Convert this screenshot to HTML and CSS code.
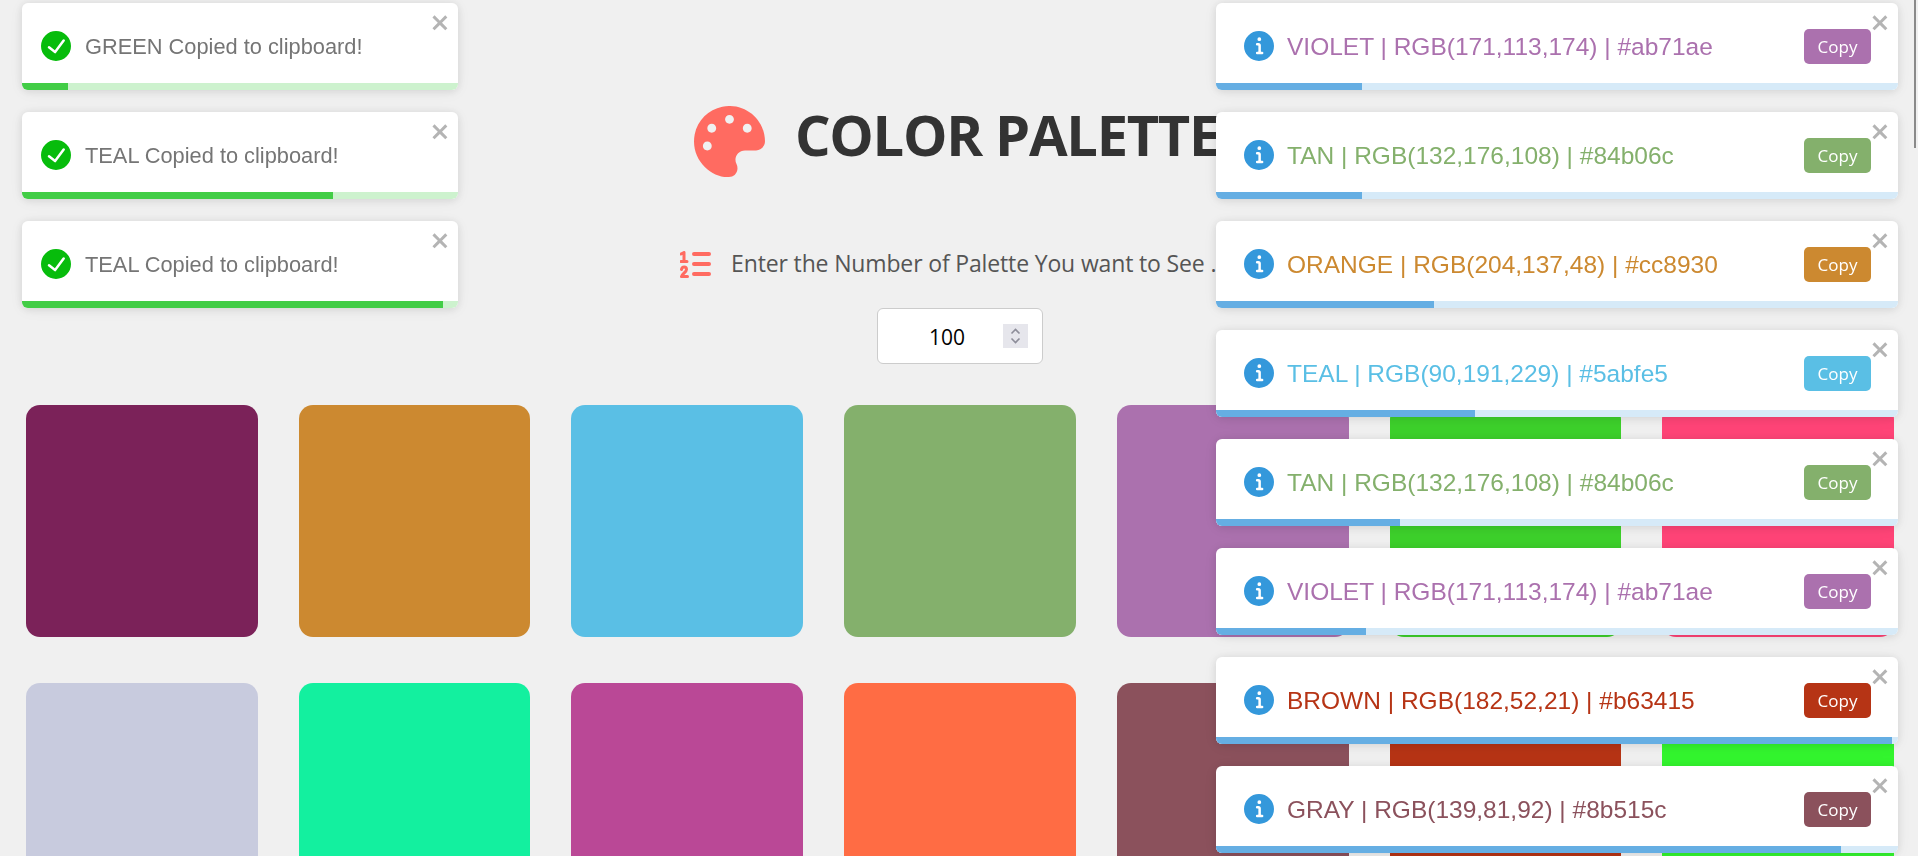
FILE: index.html
```html
<!DOCTYPE html>
<html lang="en">
<head>
<meta charset="utf-8">
<title>Color Palette</title>
<link rel="stylesheet" href="styles.css">
</head>
<body>
<main class="page">
  <header class="header">
    <h1 class="title">
      <svg class="title-icon" viewBox="0 0 512 512"><path d="M204.3 5C104.9 24.4 24.8 104.3 5.2 203.4c-37 187 131.7 326.4 258.8 306.7 41.2-6.4 61.4-54.6 42.5-91.7-23.1-45.4 9.9-98.4 60.9-98.4h79.7c35.8 0 64.8-29.6 64.9-65.3C511.5 97.1 368.1-26.9 204.3 5zM96 320c-17.7 0-32-14.3-32-32s14.3-32 32-32 32 14.3 32 32-14.3 32-32 32zm32-128c-17.7 0-32-14.3-32-32s14.3-32 32-32 32 14.3 32 32-14.3 32-32 32zm128-64c-17.7 0-32-14.3-32-32s14.3-32 32-32 32 14.3 32 32-14.3 32-32 32zm128 64c-17.7 0-32-14.3-32-32s14.3-32 32-32 32 14.3 32 32-14.3 32-32 32z"/></svg>
      <span class="title-text">COLOR PALETTE</span>
    </h1>
    <p class="prompt">
      <svg class="prompt-icon" viewBox="0 0 31 27"><path class="num" d="M1 3 4 1.5V10.5M1 10.5H7"/><path class="num" d="M1.5 18.5C2 15 6.5 15 6.5 18.5 6.5 21 2 23 1.5 25.5H7.5"/><path class="bar" d="M14 3H29M14 13H29M14 23H29"/></svg>
      <span class="prompt-text">Enter the Number of Palette You want to See .....</span>
    </p>
    <label class="number-box">
      <input class="number-input" type="number" value="100" aria-label="Number of palettes">
      <span class="spinner"><svg viewBox="0 0 25 24"><path d="M8.5 9.5 12.5 5.5 16.5 9.5M8.5 14.5 12.5 18.5 16.5 14.5"/></svg></span>
    </label>
  </header>

  <section class="swatches">
    <div class="swatch c-plum"></div>
    <div class="swatch c-orange"></div>
    <div class="swatch c-teal"></div>
    <div class="swatch c-tan"></div>
    <div class="swatch c-violet"></div>
    <div class="swatch c-green"></div>
    <div class="swatch c-pink"></div>
    <div class="swatch c-lavender"></div>
    <div class="swatch c-mint"></div>
    <div class="swatch c-magenta"></div>
    <div class="swatch c-coral"></div>
    <div class="swatch c-gray"></div>
    <div class="swatch c-brown"></div>
    <div class="swatch c-lime"></div>
  </section>
</main>

<aside class="toasts toasts-left">
  <div class="toast">
    <svg class="toast-icon success" viewBox="0 0 24 24"><path d="M12 0a12 12 0 1012 12A12.014 12.014 0 0012 0zm6.927 8.2l-6.845 9.289a1.011 1.011 0 01-1.43.188l-4.888-3.908a1 1 0 111.25-1.562l4.076 3.261 6.227-8.451a1 1 0 111.61 1.183z"/></svg>
    <span class="toast-text copied">GREEN Copied to clipboard!</span>
    <svg class="close" viewBox="0 0 14 16"><path d="M7.71 8.23l3.75 3.75-1.48 1.48-3.75-3.75-3.75 3.75L1 11.98l3.75-3.75L1 4.48 2.48 3l3.75 3.75L9.98 3l1.48 1.48-3.75 3.75z"/></svg>
    <div class="track track-success"><div class="fill fill-success" style="width:46px"></div></div>
  </div>
  <div class="toast">
    <svg class="toast-icon success" viewBox="0 0 24 24"><path d="M12 0a12 12 0 1012 12A12.014 12.014 0 0012 0zm6.927 8.2l-6.845 9.289a1.011 1.011 0 01-1.43.188l-4.888-3.908a1 1 0 111.25-1.562l4.076 3.261 6.227-8.451a1 1 0 111.61 1.183z"/></svg>
    <span class="toast-text copied">TEAL Copied to clipboard!</span>
    <svg class="close" viewBox="0 0 14 16"><path d="M7.71 8.23l3.75 3.75-1.48 1.48-3.75-3.75-3.75 3.75L1 11.98l3.75-3.75L1 4.48 2.48 3l3.75 3.75L9.98 3l1.48 1.48-3.75 3.75z"/></svg>
    <div class="track track-success"><div class="fill fill-success" style="width:311px"></div></div>
  </div>
  <div class="toast">
    <svg class="toast-icon success" viewBox="0 0 24 24"><path d="M12 0a12 12 0 1012 12A12.014 12.014 0 0012 0zm6.927 8.2l-6.845 9.289a1.011 1.011 0 01-1.43.188l-4.888-3.908a1 1 0 111.25-1.562l4.076 3.261 6.227-8.451a1 1 0 111.61 1.183z"/></svg>
    <span class="toast-text copied">TEAL Copied to clipboard!</span>
    <svg class="close" viewBox="0 0 14 16"><path d="M7.71 8.23l3.75 3.75-1.48 1.48-3.75-3.75-3.75 3.75L1 11.98l3.75-3.75L1 4.48 2.48 3l3.75 3.75L9.98 3l1.48 1.48-3.75 3.75z"/></svg>
    <div class="track track-success"><div class="fill fill-success" style="width:421px"></div></div>
  </div>
</aside>

<aside class="toasts toasts-right">
  <div class="toast toast-wide">
    <svg class="toast-icon info" viewBox="0 0 24 24"><path d="M12 0a12 12 0 1012 12A12.013 12.013 0 0012 0zm.25 5a1.5 1.5 0 11-1.5 1.5 1.5 1.5 0 011.5-1.5zm2.25 13.5h-4a1 1 0 010-2h.75a.25.25 0 00.25-.25v-4.5a.25.25 0 00-.25-.25h-.75a1 1 0 010-2h1a2 2 0 012 2v4.75a.25.25 0 00.25.25h.75a1 1 0 110 2z"/></svg>
    <span class="toast-text text-violet">VIOLET | RGB(171,113,174) | #ab71ae</span>
    <button class="copy c-violet">Copy</button>
    <svg class="close" viewBox="0 0 14 16"><path d="M7.71 8.23l3.75 3.75-1.48 1.48-3.75-3.75-3.75 3.75L1 11.98l3.75-3.75L1 4.48 2.48 3l3.75 3.75L9.98 3l1.48 1.48-3.75 3.75z"/></svg>
    <div class="track track-info"><div class="fill fill-info" style="width:146px"></div></div>
  </div>
  <div class="toast toast-wide">
    <svg class="toast-icon info" viewBox="0 0 24 24"><path d="M12 0a12 12 0 1012 12A12.013 12.013 0 0012 0zm.25 5a1.5 1.5 0 11-1.5 1.5 1.5 1.5 0 011.5-1.5zm2.25 13.5h-4a1 1 0 010-2h.75a.25.25 0 00.25-.25v-4.5a.25.25 0 00-.25-.25h-.75a1 1 0 010-2h1a2 2 0 012 2v4.75a.25.25 0 00.25.25h.75a1 1 0 110 2z"/></svg>
    <span class="toast-text text-tan">TAN | RGB(132,176,108) | #84b06c</span>
    <button class="copy c-tan">Copy</button>
    <svg class="close" viewBox="0 0 14 16"><path d="M7.71 8.23l3.75 3.75-1.48 1.48-3.75-3.75-3.75 3.75L1 11.98l3.75-3.75L1 4.48 2.48 3l3.75 3.75L9.98 3l1.48 1.48-3.75 3.75z"/></svg>
    <div class="track track-info"><div class="fill fill-info" style="width:146px"></div></div>
  </div>
  <div class="toast toast-wide">
    <svg class="toast-icon info" viewBox="0 0 24 24"><path d="M12 0a12 12 0 1012 12A12.013 12.013 0 0012 0zm.25 5a1.5 1.5 0 11-1.5 1.5 1.5 1.5 0 011.5-1.5zm2.25 13.5h-4a1 1 0 010-2h.75a.25.25 0 00.25-.25v-4.5a.25.25 0 00-.25-.25h-.75a1 1 0 010-2h1a2 2 0 012 2v4.75a.25.25 0 00.25.25h.75a1 1 0 110 2z"/></svg>
    <span class="toast-text text-orange">ORANGE | RGB(204,137,48) | #cc8930</span>
    <button class="copy c-orange">Copy</button>
    <svg class="close" viewBox="0 0 14 16"><path d="M7.71 8.23l3.75 3.75-1.48 1.48-3.75-3.75-3.75 3.75L1 11.98l3.75-3.75L1 4.48 2.48 3l3.75 3.75L9.98 3l1.48 1.48-3.75 3.75z"/></svg>
    <div class="track track-info"><div class="fill fill-info" style="width:218px"></div></div>
  </div>
  <div class="toast toast-wide">
    <svg class="toast-icon info" viewBox="0 0 24 24"><path d="M12 0a12 12 0 1012 12A12.013 12.013 0 0012 0zm.25 5a1.5 1.5 0 11-1.5 1.5 1.5 1.5 0 011.5-1.5zm2.25 13.5h-4a1 1 0 010-2h.75a.25.25 0 00.25-.25v-4.5a.25.25 0 00-.25-.25h-.75a1 1 0 010-2h1a2 2 0 012 2v4.75a.25.25 0 00.25.25h.75a1 1 0 110 2z"/></svg>
    <span class="toast-text text-teal">TEAL | RGB(90,191,229) | #5abfe5</span>
    <button class="copy c-teal">Copy</button>
    <svg class="close" viewBox="0 0 14 16"><path d="M7.71 8.23l3.75 3.75-1.48 1.48-3.75-3.75-3.75 3.75L1 11.98l3.75-3.75L1 4.48 2.48 3l3.75 3.75L9.98 3l1.48 1.48-3.75 3.75z"/></svg>
    <div class="track track-info"><div class="fill fill-info" style="width:259px"></div></div>
  </div>
  <div class="toast toast-wide">
    <svg class="toast-icon info" viewBox="0 0 24 24"><path d="M12 0a12 12 0 1012 12A12.013 12.013 0 0012 0zm.25 5a1.5 1.5 0 11-1.5 1.5 1.5 1.5 0 011.5-1.5zm2.25 13.5h-4a1 1 0 010-2h.75a.25.25 0 00.25-.25v-4.5a.25.25 0 00-.25-.25h-.75a1 1 0 010-2h1a2 2 0 012 2v4.75a.25.25 0 00.25.25h.75a1 1 0 110 2z"/></svg>
    <span class="toast-text text-tan">TAN | RGB(132,176,108) | #84b06c</span>
    <button class="copy c-tan">Copy</button>
    <svg class="close" viewBox="0 0 14 16"><path d="M7.71 8.23l3.75 3.75-1.48 1.48-3.75-3.75-3.75 3.75L1 11.98l3.75-3.75L1 4.48 2.48 3l3.75 3.75L9.98 3l1.48 1.48-3.75 3.75z"/></svg>
    <div class="track track-info"><div class="fill fill-info" style="width:184px"></div></div>
  </div>
  <div class="toast toast-wide">
    <svg class="toast-icon info" viewBox="0 0 24 24"><path d="M12 0a12 12 0 1012 12A12.013 12.013 0 0012 0zm.25 5a1.5 1.5 0 11-1.5 1.5 1.5 1.5 0 011.5-1.5zm2.25 13.5h-4a1 1 0 010-2h.75a.25.25 0 00.25-.25v-4.5a.25.25 0 00-.25-.25h-.75a1 1 0 010-2h1a2 2 0 012 2v4.75a.25.25 0 00.25.25h.75a1 1 0 110 2z"/></svg>
    <span class="toast-text text-violet">VIOLET | RGB(171,113,174) | #ab71ae</span>
    <button class="copy c-violet">Copy</button>
    <svg class="close" viewBox="0 0 14 16"><path d="M7.71 8.23l3.75 3.75-1.48 1.48-3.75-3.75-3.75 3.75L1 11.98l3.75-3.75L1 4.48 2.48 3l3.75 3.75L9.98 3l1.48 1.48-3.75 3.75z"/></svg>
    <div class="track track-info"><div class="fill fill-info" style="width:150px"></div></div>
  </div>
  <div class="toast toast-wide">
    <svg class="toast-icon info" viewBox="0 0 24 24"><path d="M12 0a12 12 0 1012 12A12.013 12.013 0 0012 0zm.25 5a1.5 1.5 0 11-1.5 1.5 1.5 1.5 0 011.5-1.5zm2.25 13.5h-4a1 1 0 010-2h.75a.25.25 0 00.25-.25v-4.5a.25.25 0 00-.25-.25h-.75a1 1 0 010-2h1a2 2 0 012 2v4.75a.25.25 0 00.25.25h.75a1 1 0 110 2z"/></svg>
    <span class="toast-text text-brown">BROWN | RGB(182,52,21) | #b63415</span>
    <button class="copy c-brown">Copy</button>
    <svg class="close" viewBox="0 0 14 16"><path d="M7.71 8.23l3.75 3.75-1.48 1.48-3.75-3.75-3.75 3.75L1 11.98l3.75-3.75L1 4.48 2.48 3l3.75 3.75L9.98 3l1.48 1.48-3.75 3.75z"/></svg>
    <div class="track track-info"><div class="fill fill-info" style="width:676px"></div></div>
  </div>
  <div class="toast toast-wide">
    <svg class="toast-icon info" viewBox="0 0 24 24"><path d="M12 0a12 12 0 1012 12A12.013 12.013 0 0012 0zm.25 5a1.5 1.5 0 11-1.5 1.5 1.5 1.5 0 011.5-1.5zm2.25 13.5h-4a1 1 0 010-2h.75a.25.25 0 00.25-.25v-4.5a.25.25 0 00-.25-.25h-.75a1 1 0 010-2h1a2 2 0 012 2v4.75a.25.25 0 00.25.25h.75a1 1 0 110 2z"/></svg>
    <span class="toast-text text-gray">GRAY | RGB(139,81,92) | #8b515c</span>
    <button class="copy c-gray">Copy</button>
    <svg class="close" viewBox="0 0 14 16"><path d="M7.71 8.23l3.75 3.75-1.48 1.48-3.75-3.75-3.75 3.75L1 11.98l3.75-3.75L1 4.48 2.48 3l3.75 3.75L9.98 3l1.48 1.48-3.75 3.75z"/></svg>
    <div class="track track-info"><div class="fill fill-info" style="width:625px"></div></div>
  </div>
</aside>
<div class="scroll-thumb"></div>
</body>
</html>
```

FILE: styles.css
```css
* { box-sizing: border-box; }

html, body { height: 100%; overflow: hidden; }

body {
  margin: 0;
  background: #f0f0f0;
  font-family: "Open Sans", "Noto Sans", sans-serif;
}

.page { padding: 106px 24px 0 26px; }

.header {
  display: flex;
  flex-direction: column;
  align-items: center;
}

.title {
  display: flex;
  align-items: center;
  gap: 30px;
  height: 71px;
  margin: 0 0 70px;
  padding-right: 7px;
  font-size: 56px;
  font-weight: 700;
  line-height: 71px;
  letter-spacing: -1.3px;
  color: #333;
  white-space: nowrap;
}

.title-text { padding-bottom: 14px; }

.title-icon { width: 71px; height: 71px; fill: #ff6b61; }

.prompt {
  display: flex;
  align-items: center;
  gap: 20px;
  height: 34px;
  margin: 0 0 27px;
  font-size: 23px;
  letter-spacing: -.15px;
  color: #555;
  white-space: nowrap;
}

.prompt-text { padding-bottom: 2px; }

.prompt-icon { width: 31px; height: 27px; }
.prompt-icon path { fill: none; stroke: #ff6b61; stroke-linecap: round; stroke-linejoin: round; }
.prompt-icon .num { stroke-width: 3; }
.prompt-icon .bar { stroke-width: 4; }

.number-box {
  display: flex;
  align-items: center;
  width: 166px;
  height: 56px;
  padding: 0 14px 0 28px;
  background: #fff;
  border: 1px solid #ccc;
  border-radius: 6px;
}

.number-input {
  flex: 1;
  min-width: 0;
  padding: 2px 0 0;
  border: 0;
  outline: 0;
  background: none;
  font: 400 21px "Open Sans", sans-serif;
  color: #000;
  text-align: center;
  appearance: textfield;
}

.spinner { width: 25px; height: 24px; background: #e6e6ec; }
.spinner svg { display: block; width: 25px; height: 24px; }
.spinner path { fill: none; stroke: #8d8d99; stroke-width: 1.6; }

.swatches {
  display: grid;
  grid-template-columns: repeat(7, 1fr);
  gap: 46px 41px;
  margin-top: 41px;
}

.swatch { height: 232px; border-radius: 14px; }

.c-plum { background: #7b2259; }
.c-orange { background: #cc8930; }
.c-teal { background: #5abfe5; }
.c-tan { background: #84b06c; }
.c-violet { background: #ab71ae; }
.c-green { background: #3dd02b; }
.c-pink { background: #ff4477; }
.c-lavender { background: #c8cbde; }
.c-mint { background: #13f09f; }
.c-magenta { background: #ba4896; }
.c-coral { background: #ff6c44; }
.c-gray { background: #8b515c; }
.c-brown { background: #b63415; }
.c-lime { background: #33f52e; }

.toasts {
  position: fixed;
  top: 3px;
  display: flex;
  flex-direction: column;
  gap: 22px;
}

.toasts-left { left: 22px; width: 436px; }
.toasts-right { right: 20px; width: 682px; }

.toast {
  position: relative;
  display: flex;
  align-items: center;
  gap: 14px;
  height: 87px;
  padding: 0 27px 1px 19px;
  background: #fff;
  border-radius: 6px;
  overflow: hidden;
  box-shadow: 0 1px 10px rgba(0, 0, 0, .1), 0 2px 15px rgba(0, 0, 0, .05);
}

.toast-wide { padding-left: 28px; gap: 13px; }

.toast-icon { flex: none; width: 30px; height: 30px; }
.toast-icon.success { fill: #07bc0c; }
.toast-icon.info { fill: #3498db; }

.toast-text {
  flex: 1;
  padding-top: 2px;
  font-family: "Liberation Sans", Arial, sans-serif;
  white-space: nowrap;
}
.copied { font-size: 21.8px; color: #757575; }

.toast-wide .toast-text { font-size: 24.5px; }
.text-violet { color: #ab71ae; }
.text-tan { color: #84b06c; }
.text-orange { color: #cc8930; }
.text-teal { color: #5abfe5; }
.text-brown { color: #b63415; }
.text-gray { color: #8b515c; }

.copy {
  flex: none;
  width: 67px;
  height: 35px;
  padding: 0;
  border: 0;
  border-radius: 5px;
  font: 400 17px "Open Sans", sans-serif;
  color: #fff;
}

.close {
  position: absolute;
  top: 7.7px;
  right: 7px;
  width: 20px;
  height: 23px;
  fill: #b4b4b4;
}

.track {
  position: absolute;
  left: 0;
  right: 0;
  bottom: 0;
  height: 7px;
}

.fill { height: 100%; }
.track-success { background: #cdf2ce; }
.fill-success { background: #42cd46; }
.track-info { background: #d6eaf8; }
.fill-info { background: #65aee3; }

.scroll-thumb {
  position: fixed;
  top: 0;
  right: 2px;
  width: 2px;
  height: 148px;
  background: #8a8a8a;
}
```
